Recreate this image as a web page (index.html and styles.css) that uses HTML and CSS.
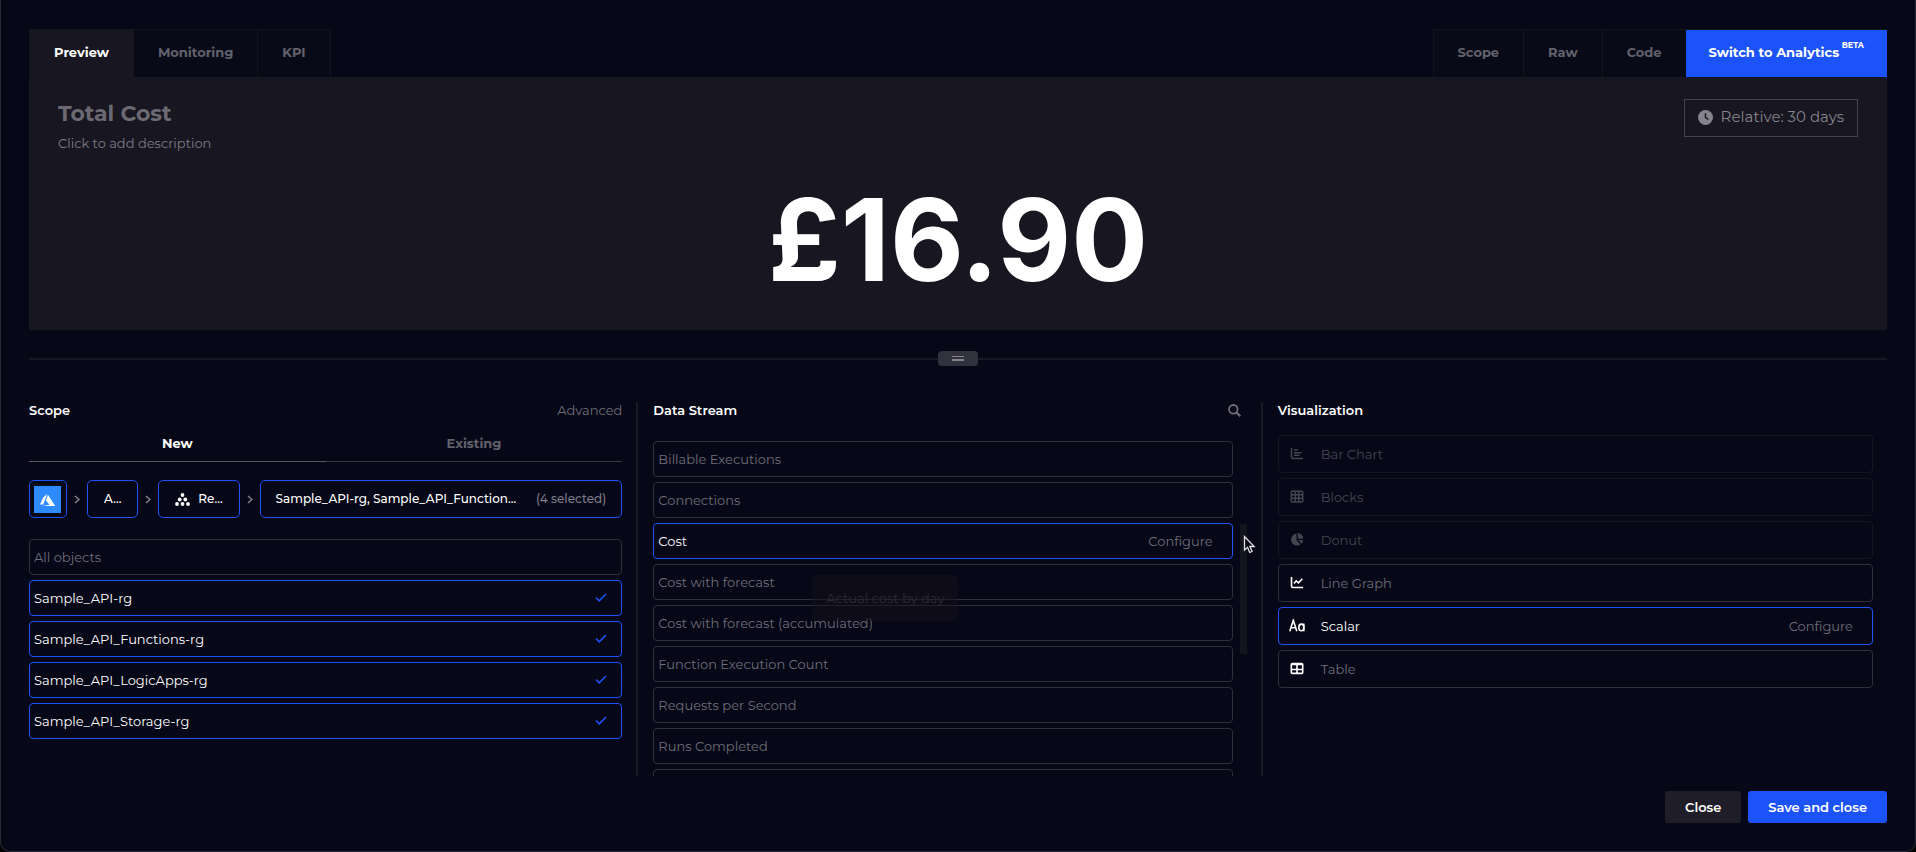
FILE: index.html
```html
<!DOCTYPE html>
<html lang="en">
<head>
  <meta charset="UTF-8" />
  <meta name="viewport" content="width=device-width, initial-scale=1.0" />
  <title>Total Cost</title>
  <link rel="stylesheet" href="styles.css">
</head>
<body>
  <main class="modal">

    <!-- Tabs -->
    <nav class="tabs">
      <div class="tab-group">
        <button class="tab active">Preview</button>
        <button class="tab">Monitoring</button>
        <button class="tab">KPI</button>
      </div>
      <div class="tab-group">
        <button class="tab">Scope</button>
        <button class="tab">Raw</button>
        <button class="tab">Code</button>
        <button class="tab primary">Switch to Analytics <sup>BETA</sup></button>
      </div>
    </nav>

    <!-- Tile preview -->
    <section class="preview">
      <header class="preview-head">
        <div>
          <h1>Total Cost</h1>
          <p class="description">Click to add description</p>
        </div>
        <button class="timeframe">
          <svg width="15" height="15" viewBox="0 0 16 16"><circle cx="8" cy="8" r="8" fill="currentColor"/><path d="M8 3.5V8l3 2" fill="none" stroke="#181620" stroke-width="1.6"/></svg>
          Relative: 30 days
        </button>
      </header>
      <div class="scalar">£16.90</div>
    </section>

    <div class="splitter">
      <button class="handle" aria-label="Resize"><span></span></button>
    </div>

    <div class="columns">

      <!-- Scope -->
      <section class="column">
        <header class="column-head">
          <h2>Scope</h2>
          <button class="link">Advanced</button>
        </header>
        <div class="subtabs">
          <button class="subtab active">New</button>
          <button class="subtab">Existing</button>
        </div>
        <div class="crumbs">
          <button class="crumb crumb-logo" aria-label="Azure">
            <svg width="27" height="27" viewBox="0 0 27 27"><rect width="27" height="27" fill="#2e8bff"/><path d="M13.200 8 9.300 11.500 6 18.500h3.200z" fill="#fff"/><path d="M14 8.800 21.200 20H8.500l7-1.300-3.600-4.200z" fill="#fff"/></svg>
          </button>
          <svg class="chevron" width="6" height="9" viewBox="0 0 6 9"><path d="M1 1l4 3.500L1 8"/></svg>
          <button class="crumb">A...</button>
          <svg class="chevron" width="6" height="9" viewBox="0 0 6 9"><path d="M1 1l4 3.500L1 8"/></svg>
          <button class="crumb">
            <svg width="15" height="13" viewBox="0 0 15 13" fill="currentColor"><circle cx="7.500" cy="2" r="1.900"/><circle cx="4.700" cy="6.500" r="1.900"/><circle cx="10.300" cy="6.500" r="1.900"/><circle cx="2" cy="11" r="1.900"/><circle cx="7.500" cy="11" r="1.900"/><circle cx="13" cy="11" r="1.900"/></svg>
            Re...
          </button>
          <svg class="chevron" width="6" height="9" viewBox="0 0 6 9"><path d="M1 1l4 3.500L1 8"/></svg>
          <button class="crumb crumb-wide">
            <span>Sample_API-rg, Sample_API_Function...</span>
            <span class="muted">(4 selected)</span>
          </button>
        </div>
        <div class="list">
          <button class="row">All objects</button>
          <button class="row selected">Sample_API-rg <svg class="check" width="12" height="9" viewBox="0 0 12 9"><path d="M1 4.500 4.300 7.800 11 1"/></svg></button>
          <button class="row selected">Sample_API_Functions-rg <svg class="check" width="12" height="9" viewBox="0 0 12 9"><path d="M1 4.500 4.300 7.800 11 1"/></svg></button>
          <button class="row selected">Sample_API_LogicApps-rg <svg class="check" width="12" height="9" viewBox="0 0 12 9"><path d="M1 4.500 4.300 7.800 11 1"/></svg></button>
          <button class="row selected">Sample_API_Storage-rg <svg class="check" width="12" height="9" viewBox="0 0 12 9"><path d="M1 4.500 4.300 7.800 11 1"/></svg></button>
        </div>
      </section>

      <!-- Data stream -->
      <section class="column">
        <header class="column-head stream-head">
          <h2>Data Stream</h2>
          <button class="link search" aria-label="Search">
            <svg width="13" height="13" viewBox="0 0 13 13" fill="none" stroke="currentColor" stroke-width="1.800"><circle cx="5.300" cy="5.300" r="4.300"/><path d="M8.500 8.500 12.300 12.300" stroke-width="2.200"/></svg>
          </button>
        </header>
        <div class="stream">
          <div class="list">
            <button class="row">Billable Executions</button>
            <button class="row">Connections</button>
            <div class="row selected">Cost <button class="link configure">Configure</button></div>
            <button class="row">Cost with forecast</button>
            <button class="row">Cost with forecast (accumulated)</button>
            <button class="row">Function Execution Count</button>
            <button class="row">Requests per Second</button>
            <button class="row">Runs Completed</button>
            <button class="row" aria-label="More"></button>
          </div>
          <div class="scroll-thumb"></div>
          <div class="tooltip">Actual cost by day</div>
          <svg class="cursor" width="13" height="20" viewBox="0 0 13 20"><path d="M1.500 1.500v13.500l3-2.700 2.200 5.200 2.400-1-2.200-5h4.300z" fill="#0b0b14" stroke="#dddde2" stroke-width="1.300"/></svg>
        </div>
      </section>

      <!-- Visualization -->
      <section class="column">
        <header class="column-head">
          <h2>Visualization</h2>
        </header>
        <div class="list visuals">
          <button class="row" disabled>
            <svg width="16" height="13" viewBox="0 0 13 13" fill="none" stroke="currentColor" stroke-width="1.500"><path d="M1 1v9q0 1.500 1.500 1.500H12.500M3.500 3h4M3.500 5.700h7.500M3.500 8.300h5.500"/></svg>
            Bar Chart
          </button>
          <button class="row" disabled>
            <svg width="16" height="13" viewBox="0 0 13 13" fill="none" stroke="currentColor" stroke-width="1.500"><rect x=".8" y="1.300" width="11.400" height="10.600" rx="1"/><path d="M1 4.800h11M1 8.300h11M4.700 1v11M8.300 1v11"/></svg>
            Blocks
          </button>
          <button class="row" disabled>
            <svg width="16" height="13" viewBox="0 0 13 13" fill="currentColor"><path d="M6 .6V7l4 4.500A6 6 0 1 1 6 .6z"/><path d="M7.300 0a5.800 5.800 0 0 1 5.500 5.700H7.300z"/><path d="M7.800 7h5a6 6 0 0 1-1.700 3.700z"/></svg>
            Donut
          </button>
          <button class="row">
            <svg width="16" height="13" viewBox="0 0 13 13" fill="none" stroke="currentColor" stroke-width="1.600"><path d="M1 1v9q0 1.500 1.500 1.500H12.500M3.500 7.500 5.700 4.800 8 6.800 11.800 2.800"/></svg>
            Line Graph
          </button>
          <div class="row selected">
            <svg width="16" height="13" viewBox="0 0 16 13" fill="none" stroke="currentColor" stroke-width="1.600"><path d="M.8 12.300 4.300 1.300 7.800 12.300M2 8.700h4.600M14.800 4.500v7.800"/><ellipse cx="12.300" cy="8.400" rx="2.500" ry="3.300"/></svg>
            Scalar <button class="link configure">Configure</button>
          </div>
          <button class="row">
            <svg width="16" height="13" viewBox="0 0 13 13" fill="none" stroke="currentColor" stroke-width="1.600"><rect x=".8" y="1.600" width="11.400" height="9.800" rx="1"/><path d="M1 2.500h11M1 7.500h11M6.500 2v9"/></svg>
            Table
          </button>
        </div>
      </section>

    </div>

    <footer class="actions">
      <button class="btn">Close</button>
      <button class="btn primary">Save and close</button>
    </footer>
  </main>
</body>
</html>
```

FILE: styles.css
```css
* {
  box-sizing: border-box;
}
body {
  margin: 0;
  background: #000;
  color: #fff;
  font-family: Montserrat, Inter, sans-serif;
  font-size: 13px;
  line-height: 20px;
}
h1, h2, p {
  margin: 0;
}
button {
  font: inherit;
  color: inherit;
  background: none;
  border: 0;
  padding: 0;
  white-space: nowrap;
}
svg {
  flex: none;
}

.modal {
  display: flex;
  flex-direction: column;
  height: 100vh;
  padding: 29px 28px 28px;
  background: #060717;
  border: 1px solid #2a2a35;
  border-top: 0;
  border-radius: 0 0 10px 10px;
}

/* tabs */
.tabs {
  display: flex;
  justify-content: space-between;
}
.tab-group {
  display: flex;
  border: 1px solid #14141f;
  border-bottom: 0;
}
.tab-group:last-child {
  border-right: 0;
}
.tab {
  height: 47px;
  padding: 0 24px 3px;
  border-left: 1px solid #14141f;
  background: #090a18;
  color: #62626d;
  font-weight: 700;
}
.tab:first-child {
  border-left: 0;
}
.tab.active {
  background: #181620;
  color: #fff;
}
.primary, .tab.primary {
  background: #1c53f8;
  color: #fff;
}
.tab.primary {
  padding: 0 23px 3px;
  border-left: 0;
}
.tab sup {
  margin-left: -1px;
  font-size: 8px;
  line-height: 0;
  vertical-align: 9px;
}

/* preview */
.preview {
  height: 253px;
  flex: none;
  padding: 22px 29px;
  background: #181620;
}
.preview-head {
  display: flex;
  justify-content: space-between;
  align-items: flex-start;
}
h1 {
  margin-top: 1px;
  color: #6b6972;
  font-size: 22px;
  line-height: 28px;
}
.description {
  margin-top: 5px;
  color: #7d7c88;
}
.timeframe {
  display: flex;
  align-items: center;
  gap: 8px;
  height: 38px;
  padding: 0 13px 2px;
  border: 1px solid #45434e;
  color: #85848d;
  font-size: 15px;
}
.scalar {
  margin-top: 27px;
  font-family: Inter, sans-serif;
  font-size: 114px;
  font-weight: 700;
  line-height: 120px;
  text-align: center;
}

/* splitter */
.splitter {
  display: flex;
  align-items: center;
  justify-content: center;
  height: 15px;
  margin: 21px 0 36px;
  background: linear-gradient(#181824, #181824) center / 100% 2px no-repeat;
}
.handle {
  display: grid;
  place-items: center;
  width: 40px;
  height: 15px;
  border-radius: 4px;
  background: #32323f;
}
.handle span {
  width: 12px;
  height: 5px;
  border: solid #85848d;
  border-width: 1px 0 2px;
}

/* columns */
.columns {
  display: grid;
  grid-template-columns: repeat(3, minmax(0, 1fr));
  gap: 15px;
  flex: 1;
  min-height: 0;
}
.column {
  display: flex;
  flex-direction: column;
  min-height: 0;
  padding-right: 14px;
  border-right: 2px solid #1b1b27;
}
.column:last-child {
  border-right: 0;
}
.column-head {
  display: flex;
  justify-content: space-between;
  align-items: center;
  height: 18px;
  padding-bottom: 2px;
}
h2 {
  font-size: 13px;
  font-weight: 600;
}
.column-head.stream-head {
  padding-right: 6px;
}
.link {
  color: #6e6e7a;
}
.search {
  display: flex;
}

.subtabs {
  display: grid;
  grid-template-columns: 1fr 1fr;
  margin-top: 13px;
}
.subtab {
  height: 29px;
  padding-bottom: 9px;
  border-bottom: 1px solid #383844;
  color: #62626d;
  font-weight: 700;
}
.subtab.active {
  border-color: #565662;
  color: #fff;
}

.crumbs {
  display: flex;
  align-items: center;
  gap: 7px;
  margin: 18px 0 21px;
}
.crumb {
  display: flex;
  align-items: center;
  gap: 8px;
  height: 38px;
  padding: 0 16px;
  border: 1px solid #1c53f8;
  border-radius: 5px;
  font-size: 12px;
  font-weight: 500;
}
.crumb-logo {
  padding: 0 5px 0 4px;
}
.crumb-wide {
  flex: 1;
  justify-content: space-between;
  padding: 0 15px;
}
.muted {
  color: #7d7c88;
}
.chevron {
  fill: none;
  stroke: #85848d;
  stroke-width: 1.5;
}

/* lists */
.list {
  display: flex;
  flex-direction: column;
  gap: 5px;
}
.row {
  display: flex;
  flex: none;
  align-items: center;
  height: 36px;
  padding: 0 14px 1px 4px;
  border: 1px solid #30303b;
  border-radius: 4px;
  color: #6e6e7a;
  text-align: left;
}
.row.selected {
  border-color: #1c53f8;
  color: #fff;
}
.check {
  margin-left: auto;
  fill: none;
  stroke: #1c53f8;
  stroke-width: 1.6;
}
.configure {
  margin-left: auto;
  padding-right: 5px;
}

.stream {
  position: relative;
  display: flex;
  gap: 7px;
  flex: 1;
  min-height: 0;
  margin-top: 21px;
}
.stream .list {
  flex: 1;
  overflow: hidden;
}
.scroll-thumb {
  width: 7px;
  height: 130px;
  margin-top: 83px;
  background: #14141e;
}
.tooltip {
  position: absolute;
  left: 159px;
  top: 134px;
  padding: 13px 14px;
  border-radius: 4px;
  background: rgba(22, 17, 26, 0.5);
  color: #2d2b35;
}
.cursor {
  position: absolute;
  right: -9px;
  top: 94px;
}

.visuals {
  margin-top: 15px;
}
.visuals .row {
  height: 38px;
  gap: 16px;
  padding-left: 10px;
}
.visuals .row svg {
  color: #fff;
}
.visuals .row:disabled {
  border-color: #161622;
  color: #454550;
}
.visuals .row:disabled svg {
  color: #454550;
}

/* footer */
.actions {
  display: flex;
  justify-content: flex-end;
  gap: 7px;
  margin-top: 15px;
}
.btn {
  height: 32px;
  padding: 0 20px 1px;
  border-radius: 3px;
  background: #1f1d28;
  font-weight: 600;
}
.btn.primary {
  background: #1c53f8;
}
```
